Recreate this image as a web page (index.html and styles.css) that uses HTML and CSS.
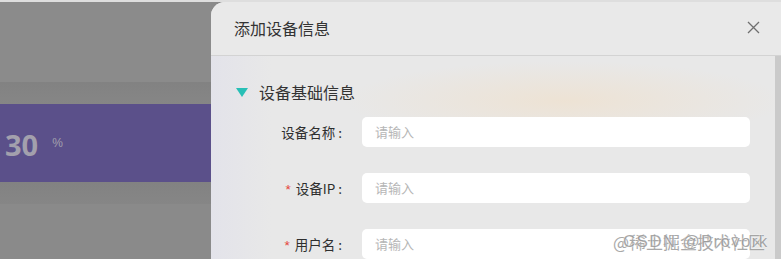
FILE: index.html
```html
<!DOCTYPE html>
<html lang="zh">
<head>
<meta charset="utf-8">
<link rel="stylesheet" href="styles.css">
</head>
<body>
<div class="topline"></div>
<div class="page">
  <div class="backdrop">
    <div class="band band-top"></div>
    <div class="band band-dark"></div>
    <div class="band band-purple">
      <span class="big-num">30</span><span class="unit">%</span>
    </div>
    <div class="band band-dark"></div>
    <div class="band band-bottom"></div>
  </div>
  <div class="drawer">
    <div class="drawer-header">
      <span class="drawer-title">添加设备信息</span>
      <svg class="close-icon" width="13" height="13" viewBox="0 0 13 13">
        <path d="M1 1 L12 12 M12 1 L1 12" stroke="#6f6f6f" stroke-width="1.3" fill="none"/>
      </svg>
    </div>
    <div class="drawer-main">
      <div class="drawer-body">
        <div class="section-title">
          <span class="triangle"></span>
          <span>设备基础信息</span>
        </div>
        <div class="form-row">
          <label class="form-label">设备名称<span class="colon">:</span></label>
          <div class="input">请输入</div>
        </div>
        <div class="form-row">
          <label class="form-label"><span class="req">*</span>设备IP<span class="colon">:</span></label>
          <div class="input">请输入</div>
        </div>
        <div class="form-row">
          <label class="form-label"><span class="req">*</span>用户名<span class="colon">:</span></label>
          <div class="input">请输入</div>
        </div>
      </div>
      <div class="scrollbar"></div>
    </div>
    <div class="watermark">
      <span class="wm wm-a">@稀土掘金技术社区</span>
      <span class="wm wm-b">CSDN @Provork</span>
    </div>
  </div>
</div>
</body>
</html>
```

FILE: styles.css
```css
* { box-sizing: border-box; }
html, body {
  margin: 0;
  padding: 0;
  width: 781px;
  height: 259px;
  overflow: hidden;
  background: #8a8a8a;
  font-family: "Noto Sans CJK SC", "Noto Sans", sans-serif;
}
.topline {
  height: 2px;
  background: #dedede;
}
.page {
  display: flex;
  height: 257px;
}
.backdrop {
  width: 211px;
  display: flex;
  flex-direction: column;
  background: #8a8a8a;
}
.band-top { height: 80px; background: #8b8b8b; }
.band-dark { height: 22px; background: linear-gradient(#828282, #868686); }
.band-purple {
  height: 78px;
  background: #5b508a;
  display: flex;
  align-items: center;
  padding-left: 5px;
}
.band-bottom { flex: 1; background: #8a8a8a; }
.big-num {
  font-family: "Open Sans", "Liberation Sans", sans-serif;
  font-weight: 700;
  font-size: 29px;
  color: #a3a0ad;
  margin-top: 3px;
}
.unit {
  font-family: "Liberation Sans", sans-serif;
  font-size: 12px;
  color: #a3a0ad;
  margin-left: 14px;
  margin-top: -1px;
}
.drawer {
  flex: 1;
  position: relative;
  background: #e9e9e9;
  border-top-left-radius: 14px;
  display: flex;
  flex-direction: column;
  overflow: hidden;
}
.drawer-header {
  height: 55px;
  border-bottom: 1px solid #d3d3d3;
  display: flex;
  align-items: center;
  justify-content: space-between;
  padding: 0 20px 0 23px;
  background: #e9e9e9;
}
.drawer-title {
  font-size: 16px;
  line-height: 20px;
  color: #333;
  margin-top: -1px;
}
.close-icon { margin-top: -2px; margin-right: 1px; }
.drawer-main {
  flex: 1;
  display: flex;
  background:
    radial-gradient(ellipse 220px 40px at 62% 45px, rgba(238,226,210,0.9), rgba(238,226,210,0) 100%),
    linear-gradient(90deg, #e3e3ea 0px, #e8e8e8 60px);
}
.drawer-body {
  flex: 1;
  padding: 24px 25px 0 24px;
}
.scrollbar {
  width: 6px;
  background: #cacaca;
}
.section-title {
  display: flex;
  align-items: center;
  height: 24px;
  font-size: 16px;
  color: #333;
}
.triangle {
  width: 0;
  height: 0;
  border-left: 6.5px solid transparent;
  border-right: 6.5px solid transparent;
  border-top: 9px solid #28bfb6;
  margin: 1px 11px 0 1px;
}
.form-row {
  display: flex;
  align-items: center;
  height: 30px;
  margin-top: 26px;
}
.section-title + .form-row { margin-top: 13px; }
.form-label {
  width: 107px;
  text-align: right;
  font-size: 13.5px;
  color: #2e2e2e;
  margin-right: 20px;
  white-space: nowrap;
}
.colon {
  margin-left: 3px;
}
.req {
  color: #e5443a;
  margin-right: 5px;
  font-family: "Liberation Sans", sans-serif;
}
.input {
  flex: 1;
  height: 30px;
  background: #fff;
  border-radius: 5px;
  font-size: 13px;
  line-height: 30px;
  color: #b6b6b6;
  padding-left: 13px;
}
.watermark {
  position: absolute;
  left: 402px;
  top: 229px;
  width: 160px;
  height: 22px;
}
.wm {
  position: absolute;
  left: 0;
  top: 0;
  font-size: 17px;
  line-height: 22px;
  color: #9a9a9a;
  white-space: nowrap;
  text-shadow: 0 0 1px #fff, 0 0 2px #fff;
  opacity: 0.85;
}
.wm-b {
  left: 10px;
  font-family: "Liberation Sans", sans-serif;
  font-size: 17px;
  letter-spacing: 1.3px;
}
```
